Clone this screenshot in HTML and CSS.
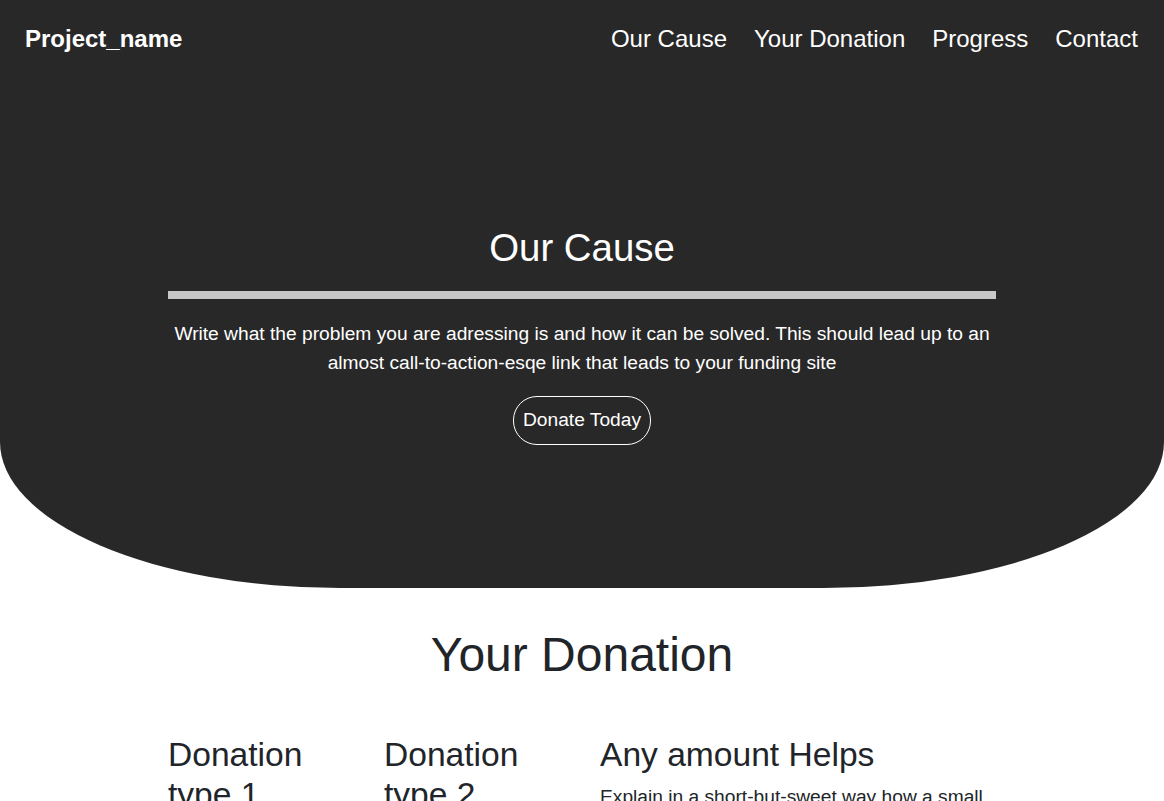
FILE: index.html
```html
<!DOCTYPE html>
<html lang="en">
<head>
<meta charset="utf-8">
<title>Project_name</title>
<link rel="stylesheet" href="styles.css">
</head>
<body>
<header class="hero">
  <nav class="nav">
    <a class="brand" href="#">Project_name</a>
    <ul class="nav-links">
      <li><a href="#cause">Our Cause</a></li>
      <li><a href="#donation">Your Donation</a></li>
      <li><a href="#progress">Progress</a></li>
      <li><a href="#contact">Contact</a></li>
    </ul>
  </nav>
  <section class="cause" id="cause">
    <h2 class="cause-title">Our Cause</h2>
    <hr class="cause-rule">
    <p class="cause-text">Write what the problem you are adressing is and how it can be solved. This should lead up to an almost call-to-action-esqe link that leads to your funding site</p>
    <a class="btn-donate" href="#">Donate Today</a>
  </section>
</header>
<main class="donation" id="donation">
  <h2 class="donation-title">Your Donation</h2>
  <div class="donation-grid">
    <div class="col">
      <h3 class="col-title">Donation type 1</h3>
    </div>
    <div class="col">
      <h3 class="col-title">Donation type 2</h3>
    </div>
    <div class="col">
      <h3 class="col-title">Any amount Helps</h3>
      <p class="col-text">Explain in a short-but-sweet way how a small donation can make a big difference for the cause and the people it serves.</p>
    </div>
  </div>
</main>
</body>
</html>
```
FILE: styles.css
```css
* { box-sizing: border-box; }
html, body { margin: 0; padding: 0; }
body {
  font-family: "Liberation Sans", Arial, sans-serif;
  color: #212529;
  background: #fff;
}
a { text-decoration: none; color: inherit; }

.hero {
  background: #282828;
  color: #fff;
  height: 588px;
  border-radius: 0 0 340px 340px / 0 0 146px 146px;
}

.nav {
  display: flex;
  align-items: center;
  justify-content: space-between;
  height: 77px;
  padding: 0 26px 0 25px;
}
.brand {
  font-size: 24px;
  font-weight: bold;
  color: #fff;
}
.nav-links {
  display: flex;
  gap: 27px;
  list-style: none;
  margin: 0;
  padding: 0;
}
.nav-links a {
  font-size: 24px;
  color: #fff;
}

.cause {
  width: 828px;
  margin: 0 auto;
  padding-top: 148px;
  display: flex;
  flex-direction: column;
  align-items: center;
  text-align: center;
}
.cause-title {
  margin: 0;
  font-size: 38.4px;
  font-weight: normal;
  line-height: 46px;
}
.cause-rule {
  align-self: stretch;
  border: 0;
  height: 8px;
  background: #c8c8c8;
  margin: 20px 0 0;
}
.cause-text {
  font-size: 19.2px;
  line-height: 29px;
  margin: 19.5px 0 0;
}
.btn-donate {
  margin-top: 19px;
  display: inline-block;
  font-size: 19.2px;
  line-height: 28.8px;
  padding: 9.6px 9px;
  border: 1px solid #fff;
  border-radius: 24px;
  color: #fff;
}

.donation {
  width: 828px;
  margin: 0 auto;
  padding-top: 38px;
}
.donation-title {
  margin: 0;
  text-align: center;
  font-size: 48px;
  font-weight: normal;
  line-height: 58px;
}
.donation-grid {
  display: grid;
  grid-template-columns: 186px 186px 1fr;
  column-gap: 30px;
  margin-top: 51px;
}
.col-title {
  margin: 0;
  font-size: 33.6px;
  font-weight: normal;
  line-height: 40px;
}
.col-text {
  margin: 8px 0 0;
  font-size: 19.2px;
  line-height: 28.8px;
}
```
